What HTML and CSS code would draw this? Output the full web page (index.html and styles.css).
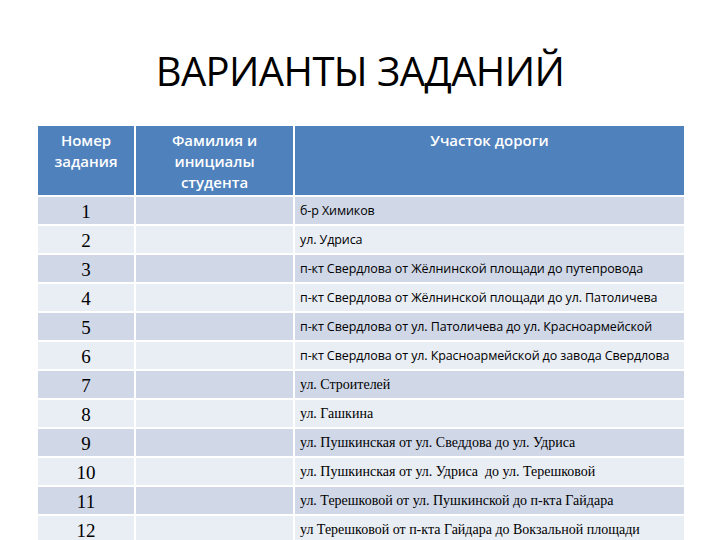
FILE: index.html
```html
<!DOCTYPE html>
<html lang="ru">
<head>
<meta charset="utf-8">
<title>Варианты заданий</title>
<link rel="stylesheet" href="styles.css">
</head>
<body>
<div class="slide">
  <h1 class="title">ВАРИАНТЫ ЗАДАНИЙ</h1>
  <table class="grid">
    <thead>
      <tr>
        <th class="c1">Номер<br>задания</th>
        <th class="c2">Фамилия и<br>инициалы<br>студента</th>
        <th class="c3">Участок дороги</th>
      </tr>
    </thead>
    <tbody>
      <tr class="odd"><td class="num">1</td><td></td><td class="sans">б-р Химиков</td></tr>
      <tr class="even"><td class="num">2</td><td></td><td class="sans">ул. Удриса</td></tr>
      <tr class="odd"><td class="num">3</td><td></td><td class="sans">п-кт Свердлова от Жёлнинской площади до путепровода</td></tr>
      <tr class="even"><td class="num">4</td><td></td><td class="sans">п-кт Свердлова от Жёлнинской площади до ул. Патоличева</td></tr>
      <tr class="odd"><td class="num">5</td><td></td><td class="sans">п-кт Свердлова от ул. Патоличева до ул. Красноармейской</td></tr>
      <tr class="even"><td class="num">6</td><td></td><td class="sans">п-кт Свердлова от ул. Красноармейской до завода Свердлова</td></tr>
      <tr class="odd"><td class="num">7</td><td></td><td class="serif">ул. Строителей</td></tr>
      <tr class="even"><td class="num">8</td><td></td><td class="serif">ул. Гашкина</td></tr>
      <tr class="odd"><td class="num">9</td><td></td><td class="serif">ул. Пушкинская от ул. Сведдова до ул. Удриса</td></tr>
      <tr class="even"><td class="num">10</td><td></td><td class="serif">ул. Пушкинская от ул. Удриса &nbsp;до ул. Терешковой</td></tr>
      <tr class="odd"><td class="num">11</td><td></td><td class="serif">ул. Терешковой от ул. Пушкинской до п-кта Гайдара</td></tr>
      <tr class="even"><td class="num">12</td><td></td><td class="serif">ул Терешковой от п-кта Гайдара до Вокзальной площади</td></tr>
    </tbody>
  </table>
</div>
</body>
</html>
```
FILE: styles.css
```css
html, body {
  margin: 0;
  padding: 0;
  background: #ffffff;
}
.slide {
  width: 720px;
  height: 540px;
  overflow: hidden;
  padding-top: 39px;
  box-sizing: border-box;
}
.title {
  margin: 0 0 21px 0;
  text-align: center;
  font-family: "Open Sans", "Noto Sans", sans-serif;
  font-weight: 400;
  font-size: 40px;
  line-height: 64px;
  color: #000;
  letter-spacing: -0.6px;
}
.grid {
  margin-left: 36px;
  border-collapse: separate;
  border-spacing: 2px;
  width: 650px;
  table-layout: fixed;
}
.grid th {
  background: #4f81bd;
  color: #ffffff;
  font-family: "Open Sans", "Noto Sans", sans-serif;
  font-weight: 600;
  font-size: 15px;
  line-height: 21px;
  text-align: center;
  vertical-align: top;
  height: 69px;
  padding: 4px 2px 0 2px;
  box-sizing: border-box;
}
.c1 { width: 96px; }
.c2 { width: 157px; }
.c3 { width: auto; }
.grid td {
  height: 27px;
  padding: 0 0 0 5px;
  box-sizing: border-box;
  white-space: nowrap;
  vertical-align: middle;
}
.odd td { background: #d0d8e8; }
.even td { background: #e9edf4; }
.num {
  text-align: center;
  font-family: "Liberation Serif", "DejaVu Serif", serif;
  font-size: 19px;
  color: #000;
  padding: 2px 5px 0 5px !important;
}
.sans {
  font-family: "Open Sans", "Noto Sans", sans-serif;
  font-size: 12.5px;
  letter-spacing: -0.1px;
  color: #000;
}
.serif {
  font-family: "Liberation Serif", "DejaVu Serif", serif;
  font-size: 14px;
  color: #000;
}
```
